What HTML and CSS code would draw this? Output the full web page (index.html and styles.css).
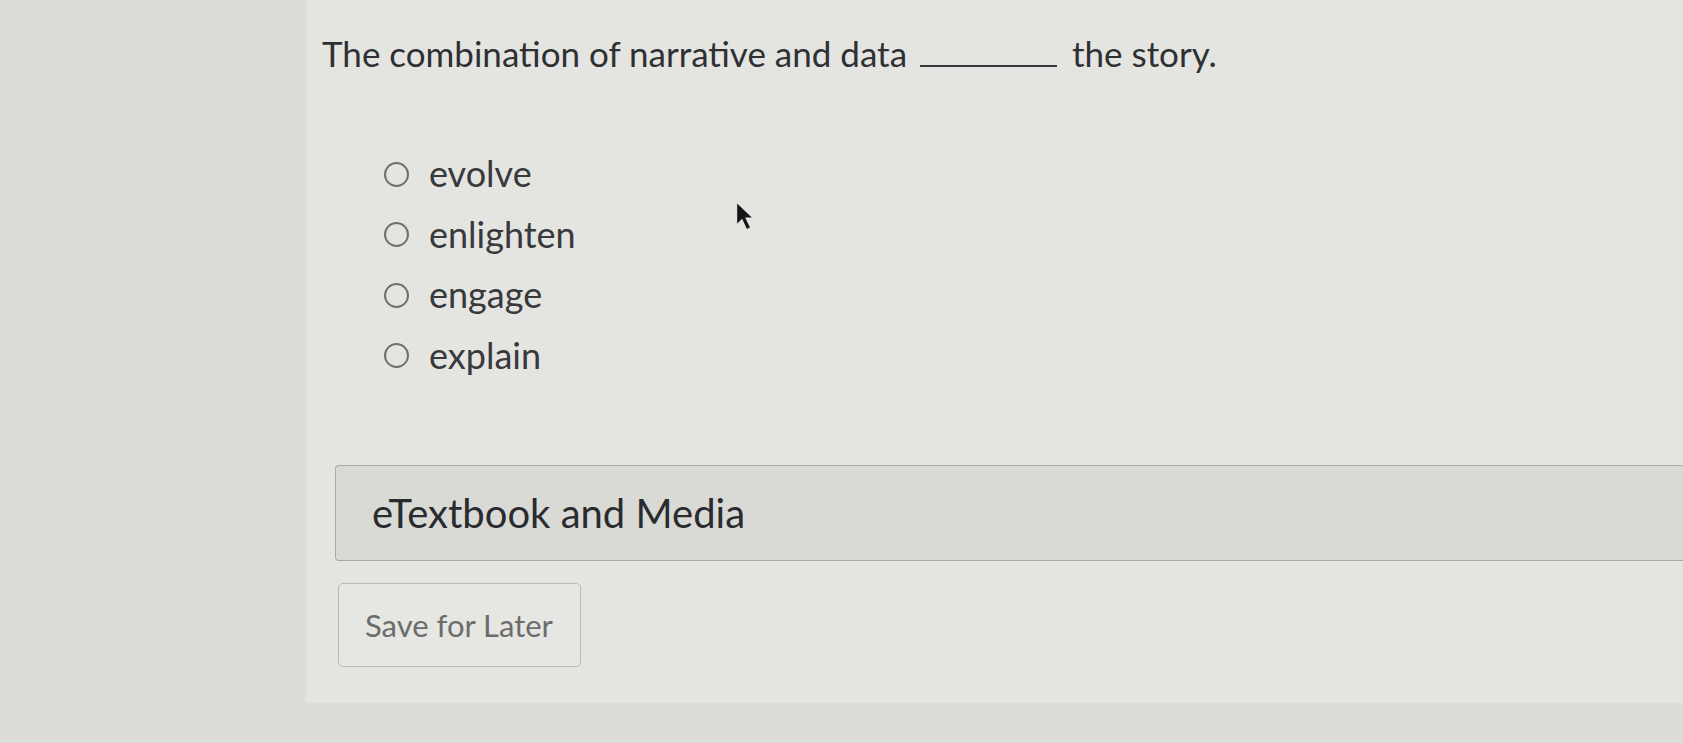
FILE: index.html
```html
<!DOCTYPE html>
<html lang="en">
<head>
    <meta charset="UTF-8">
    <meta name="viewport" content="width=device-width, initial-scale=1.0">
    <title>Question</title>
    <link rel="stylesheet" href="styles.css">
</head>
<body>
    <div class="page">
        <div class="sidebar"></div>

        <div class="content">
            <!-- Question -->
            <p class="question">The combination of narrative and data <span class="blank"></span> the story.</p>

            <!-- Answer choices -->
            <ul class="options">
                <li><span class="radio"></span>evolve</li>
                <li><span class="radio"></span>enlighten</li>
                <li><span class="radio"></span>engage</li>
                <li><span class="radio"></span>explain</li>
            </ul>

            <!-- eTextbook panel -->
            <div class="media-panel">eTextbook and Media</div>

            <button class="save-btn">Save for Later</button>

            <svg class="cursor" width="22" height="32" viewBox="0 0 16 24">
                <path d="M1 1 L1 18 L5 14 L8.5 21.5 L11.5 20 L8 12.8 L13.5 12.8 Z" fill="#151515" stroke="#e8e8e8" stroke-width="0.8"/>
            </svg>
        </div>
    </div>
</body>
</html>
```

FILE: styles.css
```css
body {
    font-family: Lato, "Open Sans", sans-serif;
    background-color: #dcddd8;
    margin: 0;
    padding: 0;
    color: #2e3034;
}

.page {
    display: flex;
    height: 743px;
}

.sidebar {
    width: 306px;
    background-color: #dcddd8;
}

.content {
    flex: 1;
    position: relative;
    height: 703px;
    padding-top: 33px;
    box-sizing: border-box;
    background-color: #e4e5e0;
}

.question {
    margin: 0 0 0 16px;
    font-size: 35px;
    line-height: 40px;
}

.blank {
    display: inline-block;
    width: 137px;
    border-bottom: 2px solid #3a3b3e;
    margin: 0 6px 0 4px;
    vertical-align: baseline;
}

.options {
    list-style: none;
    margin: 70px 0 0 78px;
    padding: 0;
}

.options li {
    display: flex;
    align-items: center;
    height: 60.5px;
    font-size: 36px;
    line-height: 60px;
    color: #38393d;
}

.radio {
    width: 21px;
    height: 21px;
    border: 2px solid #6f7071;
    border-radius: 50%;
    margin-right: 20px;
    margin-top: 2px;
    flex-shrink: 0;
}

.media-panel {
    margin: 80px 0 0 29px;
    height: 94px;
    padding-left: 36px;
    display: flex;
    align-items: center;
    font-size: 40px;
    background-color: #d9dad5;
    border: 1px solid #a9aaa5;
    border-right: none;
    border-radius: 4px 0 0 4px;
    color: #2a2b2f;
}

.save-btn {
    display: block;
    margin: 22px 0 0 32px;
    width: 243px;
    height: 84px;
    font-family: Lato, sans-serif;
    font-size: 31px;
    color: #6b6c6d;
    background-color: #e6e7e2;
    border: 1.5px solid #b9bab5;
    border-radius: 5px;
    text-align: left;
    padding-left: 26px;
}

.cursor {
    position: absolute;
    left: 429px;
    top: 201px;
}
```
